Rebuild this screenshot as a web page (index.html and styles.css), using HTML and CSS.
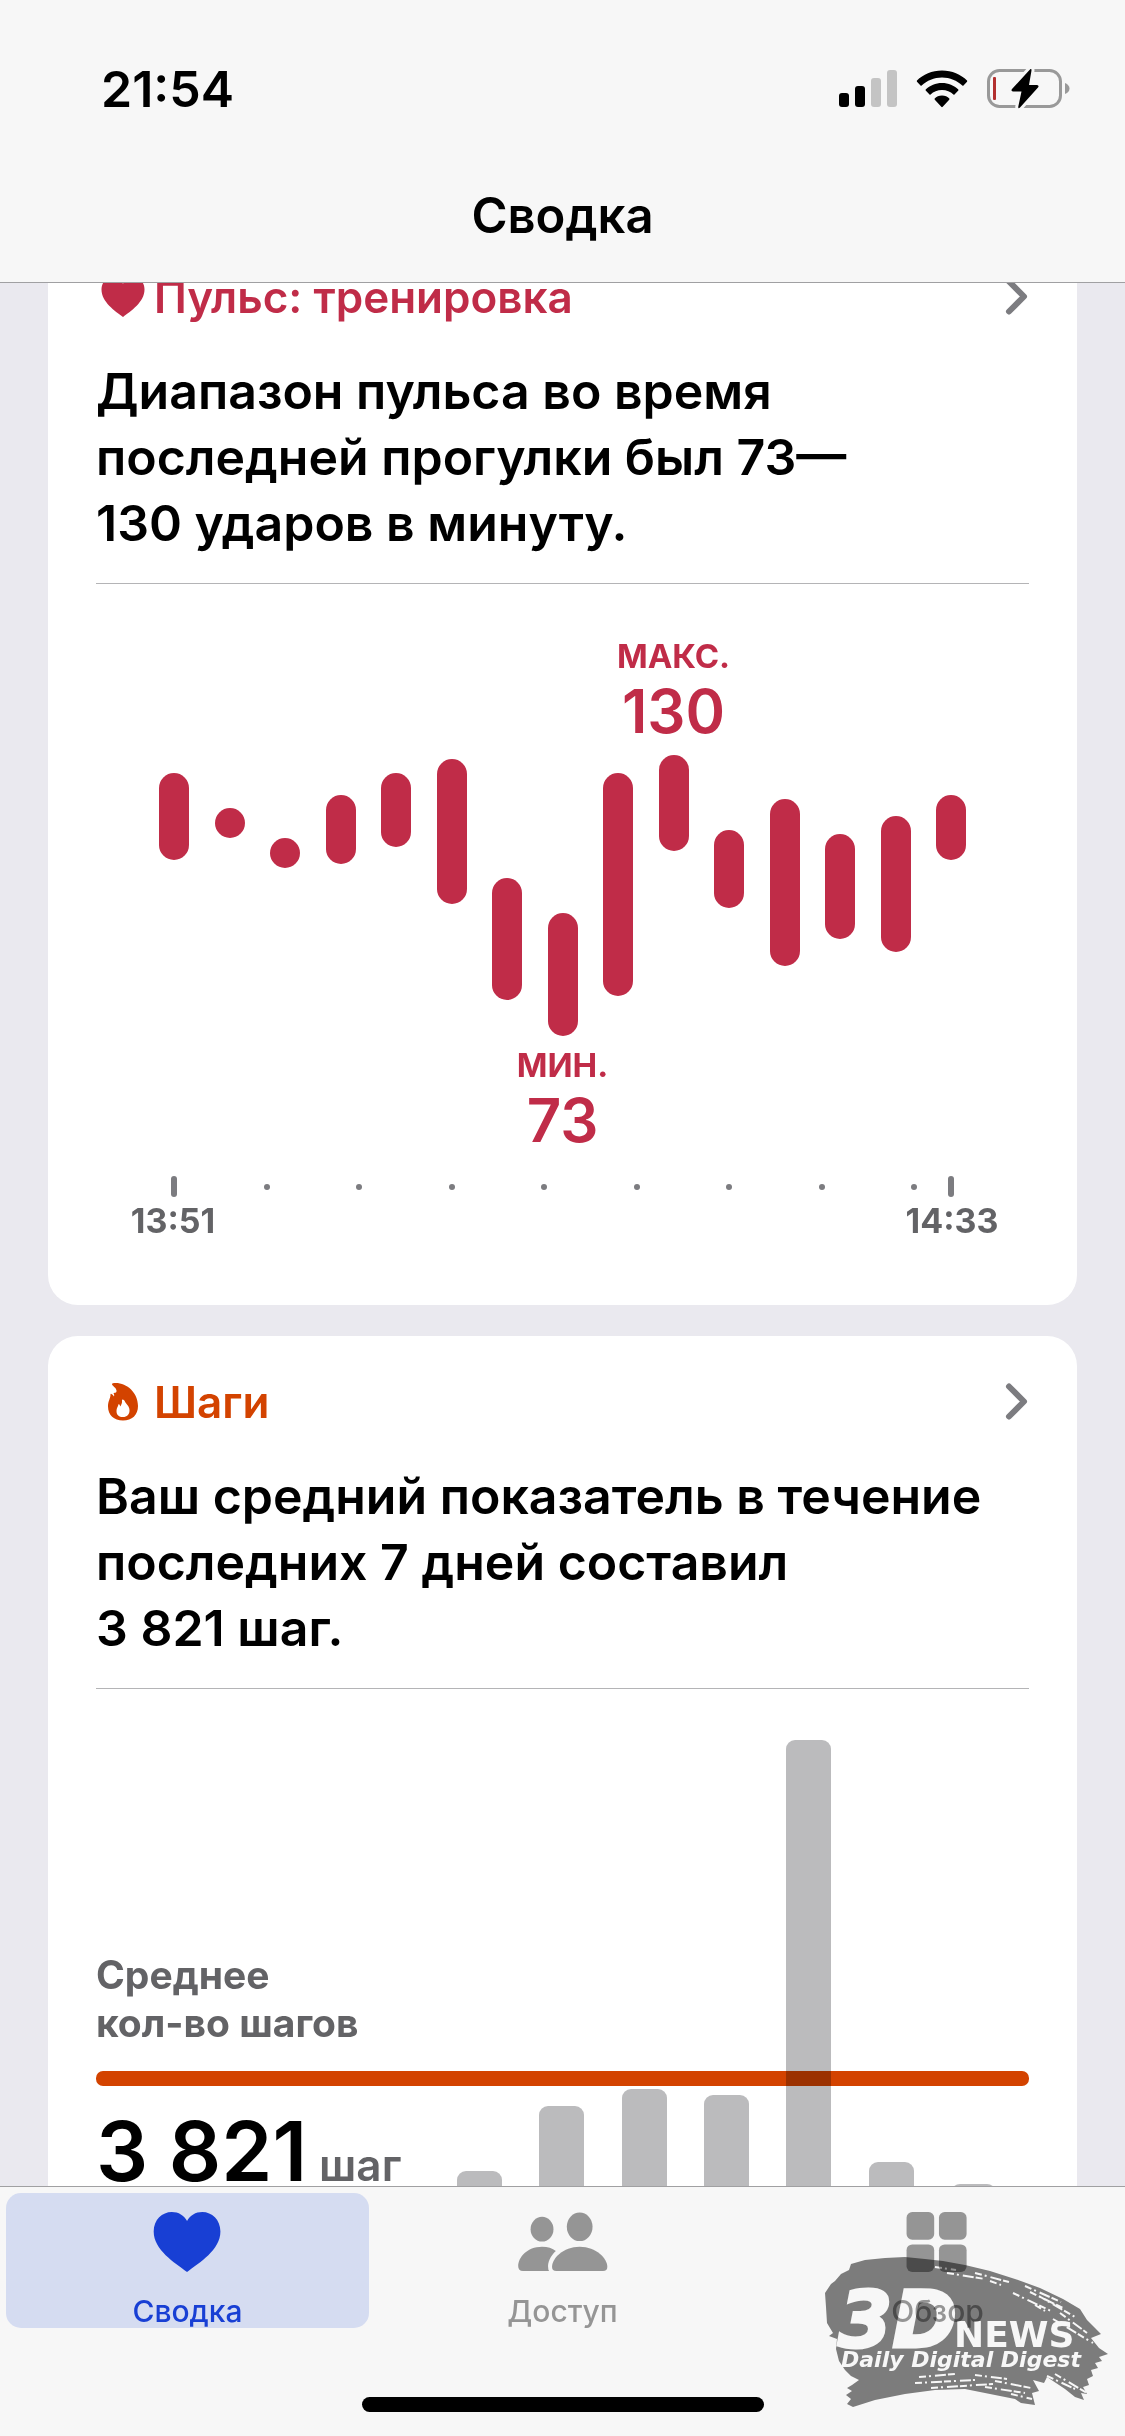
FILE: index.html
```html
<!DOCTYPE html>
<html lang="ru">
<head>
<meta charset="utf-8">
<meta name="viewport" content="width=device-width, initial-scale=1">
<title>Сводка</title>
<link rel="stylesheet" href="styles.css">
</head>
<body>
<div class="app">
  <header class="top">
    <div class="status">
      <time class="status-time">21:54</time>
      <div class="status-icons">
        <svg class="signal" viewBox="0 0 58 38" aria-hidden="true">
          <rect x="0" y="23" width="10" height="14" rx="3"/>
          <rect x="16" y="16" width="10" height="21" rx="3"/>
          <rect class="dim" x="32" y="8" width="10" height="29" rx="3"/>
          <rect class="dim" x="48" y="0" width="10" height="37" rx="3"/>
        </svg>
        <svg class="wifi" viewBox="0 0 52 38" aria-hidden="true">
          <path d="M26 0.500C36 .5 45 4.500 51 10.500Q51.500 11 51 11.700L47.500 15.500Q47 16 46.300 15.500C41 10.500 34 7.500 26 7.500S11 10.500 5.700 15.500Q5 16 4.500 15.500L1 11.700Q.5 11 1 10.500C7 4.500 16 .5 26 .5Z"/>
          <path d="M26 13C32.500 13 38 15.500 42.300 19.500Q42.700 20 42.300 20.500L38.500 24.500Q38 25 37.400 24.500C34.500 21.700 30.500 20 26 20S17.500 21.700 14.600 24.500Q14 25 13.500 24.500L9.700 20.500Q9.300 20 9.700 19.500C14 15.500 19.500 13 26 13Z"/>
          <path d="M26 25.500C29 25.500 31.600 26.700 33.300 28.600Q33.700 29.200 33.200 29.700L26.700 36.800Q26 37.500 25.300 36.800L18.800 29.700Q18.300 29.200 18.700 28.600C20.400 26.700 23 25.500 26 25.500Z"/>
        </svg>
        <svg class="battery" viewBox="0 0 84 40" aria-hidden="true">
          <rect class="shell" x="1.500" y="1.500" width="72" height="36" rx="11"/>
          <path class="cap" d="M78 14Q82.500 16 82.500 19.500T78 25Z"/>
          <rect class="level" x="6" y="8" width="3" height="23" rx="1"/>
          <path class="bolt" d="M42.500 1Q44.500-1.500 44.500 1.500L42 16H50Q52.500 16.500 51 18.500L33 38.500Q31 40.500 31.300 37.500L34.500 22.500H26Q23.500 22 25 20Z"/>
        </svg>
      </div>
    </div>
    <h1 class="title">Сводка</h1>
  </header>

  <main class="feed">
    <div class="cards">
      <article class="card heart">
        <a class="card-head" href="#pulse">
          <svg class="card-icon" viewBox="0 0 54 48" aria-hidden="true"><path d="M27 44C19 38 5.500 29 5.500 16.500C5.500 9 10.500 4.500 16.500 4.500C21 4.500 25 7 27 10.800C29 7 33 4.500 37.500 4.500C43.500 4.500 48.500 9 48.500 16.500C48.500 29 35 38 27 44Z"/></svg>
          <h2 class="card-title">Пульс: тренировка</h2>
          <svg class="chevron" viewBox="0 0 24 40" aria-hidden="true"><path d="M4 4.500 19 19.500 4 34.500"/></svg>
        </a>
        <p class="summary">Диапазон пульса во время<br>последней прогулки был 73—<br>130 ударов в минуту.</p>
        <div class="ranges">
          <div class="range" style="margin-top:138px"><i class="range-bar" style="height:87px"></i></div>
          <div class="range" style="margin-top:173px"><i class="range-bar" style="height:30px"></i></div>
          <div class="range" style="margin-top:203px"><i class="range-bar" style="height:30px"></i></div>
          <div class="range" style="margin-top:160px"><i class="range-bar" style="height:69px"></i></div>
          <div class="range" style="margin-top:138px"><i class="range-bar" style="height:74px"></i></div>
          <div class="range" style="margin-top:124px"><i class="range-bar" style="height:145px"></i></div>
          <div class="range" style="margin-top:243px"><i class="range-bar" style="height:122px"></i></div>
          <div class="range" style="margin-top:278px"><i class="range-bar" style="height:123px"></i><div class="extreme"><span>МИН.</span><strong>73</strong></div></div>
          <div class="range" style="margin-top:138px"><i class="range-bar" style="height:223px"></i></div>
          <div class="range"><div class="extreme"><span>МАКС.</span><strong>130</strong></div><i class="range-bar" style="height:96px"></i></div>
          <div class="range" style="margin-top:195px"><i class="range-bar" style="height:78px"></i></div>
          <div class="range" style="margin-top:164px"><i class="range-bar" style="height:167px"></i></div>
          <div class="range" style="margin-top:199px"><i class="range-bar" style="height:105px"></i></div>
          <div class="range" style="margin-top:181px"><i class="range-bar" style="height:136px"></i></div>
          <div class="range" style="margin-top:160px"><i class="range-bar" style="height:65px"></i></div>
        </div>
        <div class="axis"><i class="tick"></i><i></i><i></i><i></i><i></i><i></i><i></i><i></i><i></i><i class="tick"></i></div>
        <div class="axis-labels"><time>13:51</time><time>14:33</time></div>
      </article>

      <article class="card steps">
        <a class="card-head" href="#steps">
          <svg class="card-icon" viewBox="0 0 54 48" aria-hidden="true"><path fill-rule="evenodd" d="M18 5C30 4 42 14 42 28C42 37 36 42.500 27 42.500C18 42.500 12 37 12 28.500C12 23 14.500 20.500 14.500 16.500Q14.500 15.500 15.500 16Q17 16.500 18 18.500Q18.800 17.500 17.500 15Q21 15 20.500 12.500C20 9.500 17 8.500 16 6.500Q15.500 5.300 18 5ZM26.500 21.500Q25.700 21.500 26 23C26.300 25.500 25 26.500 24.500 28.500L23 26Q22.500 26 22.300 27C21.700 29 20.500 30.500 20.500 33C20.500 37 23 39 27 39S33.500 36.500 33.500 32.500C33.500 27.500 30 26.500 28.700 23Q28 21.300 26.500 21.500Z"/></svg>
          <h2 class="card-title">Шаги</h2>
          <svg class="chevron" viewBox="0 0 24 40" aria-hidden="true"><path d="M4 4.500 19 19.500 4 34.500"/></svg>
        </a>
        <p class="summary">Ваш средний показатель в течение<br>последних 7 дней составил<br>3&nbsp;821 шаг.</p>
        <div class="average">
          <div class="average-label">Среднее<br>кол-во шагов</div>
          <div class="average-line"></div>
          <div class="average-value"><strong>3&nbsp;821</strong><span>шаг</span></div>
          <div class="days">
            <i style="height:129px"></i>
            <i style="height:194px"></i>
            <i style="height:211px"></i>
            <i style="height:205px"></i>
            <i style="height:560px"></i>
            <i style="height:138px"></i>
            <i style="height:116px"></i>
          </div>
        </div>
      </article>
    </div>
  </main>

  <nav class="tabs">
    <div class="tab-row">
      <button class="tab active" type="button" aria-current="page">
        <svg viewBox="0 0 94 64" aria-hidden="true"><path d="M46 63C33 53 11 40 11 20.500C11 8 20 0 30 0C37 0 43 3.500 46 9.500C49 3.500 55 0 62 0C72 0 81 8 81 20.500C81 40 59 53 46 63Z"/></svg>
        <span>Сводка</span>
      </button>
      <button class="tab" type="button">
        <svg viewBox="0 0 94 64" aria-hidden="true">
          <ellipse cx="25" cy="18" rx="12" ry="13"/>
          <ellipse cx="64.500" cy="15.500" rx="13.500" ry="15"/>
          <path d="M25 36.500C31 36.500 36 38 39.500 41C34 46 30.500 53 31.500 59Q31.500 61 32.500 62H5Q0 62 0 57C0 48 9 36.500 25 36.500Z"/>
          <path d="M64.500 36.500C82 36.500 93.500 49 93.500 57.500Q93.500 62 89 62H40Q35.500 62 35.500 57.500C35.500 49 47 36.500 64.500 36.500Z"/>
        </svg>
        <span>Доступ</span>
      </button>
      <button class="tab" type="button">
        <svg viewBox="0 0 94 64" aria-hidden="true">
          <rect x="14" y="0" width="29" height="29" rx="6"/>
          <rect x="48" y="0" width="29" height="29" rx="6"/>
          <rect x="14" y="34" width="29" height="29" rx="6"/>
          <rect x="48" y="34" width="29" height="29" rx="6"/>
        </svg>
        <span>Обзор</span>
      </button>
    </div>
    <div class="home"></div>
  </nav>

  <svg class="watermark" viewBox="0 0 284 160" role="img" aria-label="3DNews Daily Digital Digest">
    <path class="brush" d="M26 7 40 3 60 1 80 0 100 2 118 4 140 8 165 14 190 22 215 31 238 42 255 52 262 63 270 71 276 77 266 81 274 91 283 97 274 100 277 104 270 106 273 111 266 113 268 119 262 122 264 128 258 130 262 137 256 136 259 143 250 140 240 132 222 120 219 126 208 123 214 134 207 136 210 148 196 146 190 142 180 140 160 136 140 132 110 133 80 137 50 143 28 150 22 147 26 142 21 138 27 134 22 131 27 128 34 123 26 119 20 113 14 104 11 92 12 82 4 79 8 76 2 66 1 50 0 36 6 27 10 24 16 17 24 13Z"/>
    <g class="bristles">
      <path d="M110 10 131 13M122 16 160 22M150 16 184 25M165 24 176 28M200 29 236 45M205 35 240 52M188 36 226 54M214 39 250 60M210 48 220 54M235 56 262 76M228 62 268 86"/>
      <path d="M94 120 130 117M90 126 150 123M106 131 168 127M150 118 182 122M160 130 200 136M170 124 206 131M186 137 207 142M222 119 250 132M230 117 262 136"/>
    </g>
    <text class="mark-big" x="13" y="90">3D</text>
    <text class="mark-news" x="129" y="90">NEWS</text>
    <text class="mark-sub" x="16" y="110">Daily Digital Digest</text>
  </svg>
</div>
</body>
</html>
```
FILE: styles.css
```css
* {
  box-sizing: border-box;
}

body {
  margin: 0;
  font-family: Inter, "Liberation Sans", sans-serif;
  color: #000;
  background: #eae9ef;
}

.app {
  position: relative;
  display: flex;
  flex-direction: column;
  height: 100vh;
}

/* Status bar and page title */
.top {
  flex: none;
  background: #f7f7f7;
  border-bottom: 1px solid #a0a0a2;
}

.status {
  display: flex;
  justify-content: space-between;
  align-items: center;
  padding: 59px 54px 0 101px;
}

.status-time {
  font-size: 50px;
  line-height: 60px;
  font-weight: 600;
}

.status-icons {
  display: flex;
  align-items: center;
  gap: 19px;
}

.signal {
  width: 58px;
  height: 38px;
}

.signal .dim {
  fill: #c4c4c4;
}

.wifi {
  width: 52px;
  height: 38px;
}

.battery {
  width: 84px;
  height: 40px;
}

.shell {
  fill: none;
  stroke: #999;
  stroke-width: 3;
}

.cap {
  fill: #999;
}

.level {
  fill: #b3302f;
}

.bolt {
  stroke: #f7f7f7;
  stroke-width: 6;
  paint-order: stroke;
}

.title {
  margin: 0;
  padding: 67px 0 36px;
  font-size: 49px;
  line-height: 60px;
  font-weight: 600;
  text-align: center;
}

/* Scrolled list of cards */
.feed {
  flex: 1;
  min-height: 0;
  overflow: hidden;
}

.cards {
  display: flex;
  flex-direction: column;
  gap: 31px;
  margin-top: -52px;
  padding: 0 48px;
}

.card {
  padding: 38px 48px 64px;
  background: #fff;
  border-radius: 30px;
}

.heart {
  --accent: #c02c48;
}

.steps {
  --accent: #d34300;
}

.card-head {
  display: flex;
  align-items: center;
  height: 56px;
  color: var(--accent);
  text-decoration: none;
}

.card-icon {
  width: 54px;
  height: 48px;
  margin-right: 4px;
  fill: currentColor;
}

.card-title {
  flex: 1;
  margin: 0;
  font-size: 44px;
  line-height: 56px;
  font-weight: 600;
}

.chevron {
  width: 24px;
  height: 40px;
  fill: none;
  stroke: #7c7c80;
  stroke-width: 6;
  stroke-linecap: round;
  stroke-linejoin: round;
}

.summary {
  margin: 33px 0 51px;
  padding-bottom: 27px;
  border-bottom: 1px solid #b4b4b6;
  font-size: 50px;
  line-height: 66px;
  font-weight: 600;
  white-space: nowrap;
}

/* Heart rate ranges */
.ranges {
  display: flex;
  justify-content: space-between;
  align-items: flex-start;
  padding: 0 63px;
}

.range {
  display: flex;
  flex-direction: column;
  align-items: center;
  width: 30px;
}

.range-bar {
  flex: none;
  width: 30px;
  border-radius: 15px;
  background: var(--accent);
}

.extreme {
  display: flex;
  flex-direction: column;
  align-items: center;
  padding: 9px 0 2px;
  color: var(--accent);
}

.extreme:first-child {
  padding: 1px 0 9px;
}

.extreme span {
  font-size: 33px;
  line-height: 40px;
  font-weight: 700;
}

.extreme strong {
  font-size: 60px;
  line-height: 70px;
  font-weight: 600;
}

.axis {
  display: grid;
  grid-template-columns: repeat(8, 5fr) 2fr 6px;
  align-items: center;
  height: 21px;
  margin-top: 19px;
  padding: 0 75px;
}

.axis i {
  width: 6px;
  height: 6px;
  border-radius: 3px;
  background: #7c7c80;
}

.axis .tick {
  height: 21px;
}

.axis-labels {
  display: flex;
  justify-content: space-between;
  margin-top: 4px;
  padding: 0 27px;
  color: #636366;
  font-size: 34px;
  line-height: 40px;
  font-weight: 700;
}

.axis-labels time {
  width: 100px;
  text-align: center;
}

/* Step average */
.average {
  display: grid;
  grid-template-columns: 1fr 539px;
  grid-template-rows: 331px 15px 214px;
}

.average-label {
  grid-area: 1 / 1;
  align-self: end;
  padding-bottom: 24px;
  color: #636366;
  font-size: 39px;
  line-height: 48px;
  font-weight: 700;
}

.average-line {
  grid-area: 2 / 1 / 3 / 3;
  z-index: 1;
  border-radius: 7px;
  background: var(--accent);
  mix-blend-mode: multiply;
}

.average-value {
  grid-area: 3 / 1;
  display: flex;
  align-items: baseline;
  gap: 12px;
  padding-top: 16px;
  white-space: nowrap;
}

.average-value strong {
  font-size: 82px;
  line-height: 100px;
  font-weight: 600;
}

.average-value span {
  color: #636366;
  font-size: 44px;
  font-weight: 600;
}

.days {
  grid-area: 1 / 2 / 4 / 3;
  display: flex;
  justify-content: space-between;
  align-items: flex-end;
  margin: 0 33px 0 -33px;
}

.days i {
  width: 45px;
  border-radius: 9px;
  background: #bbbbbd;
}

/* Tab bar */
.tabs {
  flex: none;
  padding-top: 6px;
  background: #f7f7f7;
  border-top: 1px solid #a0a0a2;
}

.tab-row {
  display: grid;
  grid-template-columns: repeat(3, 1fr);
}

.tab {
  display: flex;
  flex-direction: column;
  align-items: center;
  gap: 21px;
  height: 135px;
  margin: 0 6px;
  padding: 19px 0 0;
  border: 0;
  border-radius: 15px;
  background: none;
  color: #959595;
  font-family: inherit;
  font-size: 30px;
  line-height: 34px;
  font-weight: 500;
}

.tab svg {
  width: 94px;
  height: 64px;
  fill: currentColor;
}

.tab.active {
  background: #d5dcf1;
  color: #183fd4;
}

.home {
  width: 402px;
  height: 15px;
  margin: 69px auto 24px;
  border-radius: 8px;
  background: #000;
}

/* Publisher's mark over the corner of the page */
.watermark {
  position: absolute;
  right: 16px;
  bottom: 19px;
  width: 284px;
  height: 160px;
  mix-blend-mode: multiply;
  pointer-events: none;
}

.brush {
  fill: #808080;
}

.bristles {
  fill: none;
  stroke: #fff;
  stroke-width: 2;
  stroke-dasharray: 7 3 2 4 11 2;
}

.watermark text {
  fill: #fff;
  font-family: "DejaVu Sans", sans-serif;
  font-weight: 700;
}

.watermark .mark-big {
  font-size: 78px;
  font-style: italic;
  stroke: #fff;
  stroke-width: 3;
}

.mark-news {
  font-size: 36px;
}

.mark-sub {
  font-size: 22px;
  font-style: italic;
}
```
